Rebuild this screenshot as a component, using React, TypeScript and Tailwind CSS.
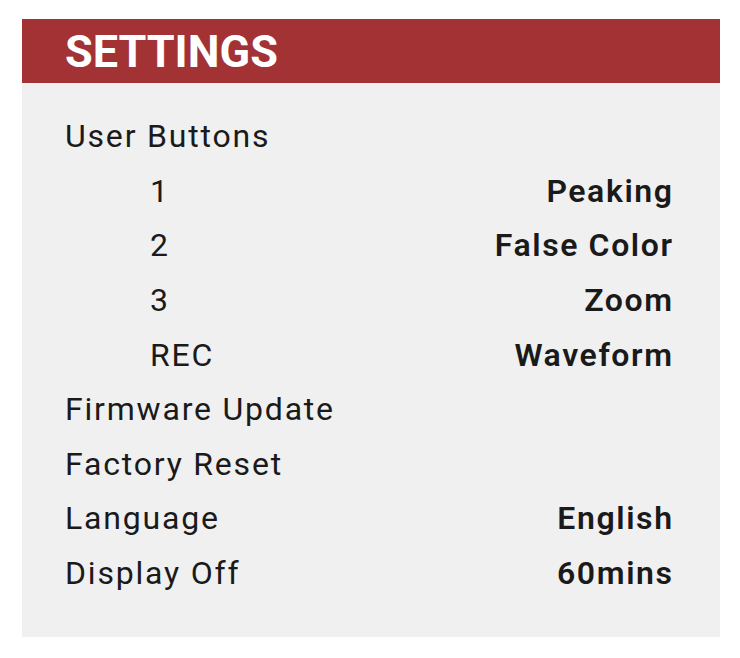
import React from 'react';

type Row = { label: string; value?: string; indent?: boolean };

const rows: Row[] = [
  { label: 'User Buttons' },
  { label: '1', value: 'Peaking', indent: true },
  { label: '2', value: 'False Color', indent: true },
  { label: '3', value: 'Zoom', indent: true },
  { label: 'REC', value: 'Waveform', indent: true },
  { label: 'Firmware Update' },
  { label: 'Factory Reset' },
  { label: 'Language', value: 'English' },
  { label: 'Display Off', value: '60mins' },
];

export default function App() {
  return (
    <div className="min-h-screen bg-white pt-[19px] pl-[22px]" style={{ fontFamily: 'Roboto, "Noto Sans", sans-serif' }}>
      <div className="w-[698px] bg-[#f0f0f0]">
        {/* Header */}
        <div className="h-[64px] bg-[#a23234] flex items-center pl-[43px]">
          <h1 className="text-[45px] font-bold text-white leading-none">SETTINGS</h1>
        </div>

        {/* Rows */}
        <div className="pt-[26px] pb-[37px] pl-[43px] pr-[48px] text-[#1a1a1a]">
          {rows.map((row, i) => (
            <div key={i} className="h-[54.6px] flex items-center justify-between text-[32px] tracking-[1.8px]">
              <span className={row.indent ? 'pl-[85px]' : ''}>{row.label}</span>
              {row.value && <span className="font-semibold tracking-[1.6px] -mr-[1.6px]">{row.value}</span>}
            </div>
          ))}
        </div>
      </div>
    </div>
  );
}
